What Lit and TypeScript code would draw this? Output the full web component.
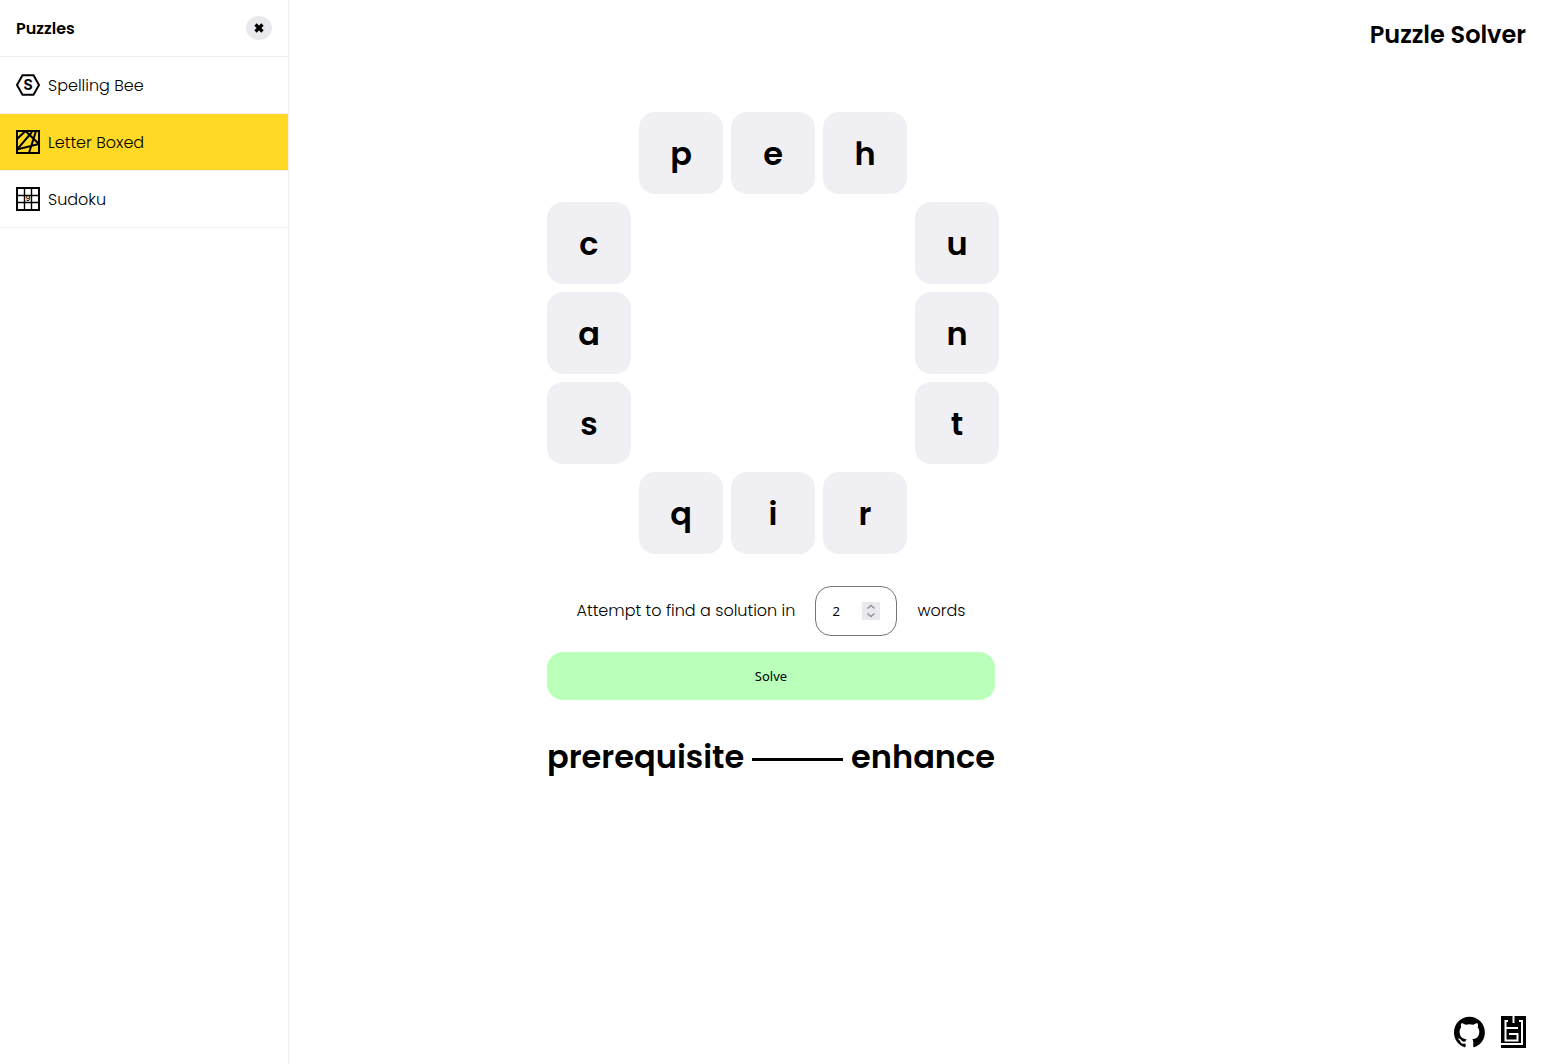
import { LitElement, html, css, svg } from "lit";
import { customElement, state } from "lit/decorators.js";

const beeIcon = svg`<svg class="icon" viewBox="0 0 24 24" aria-hidden="true">
  <path d="M6.500 2.200h11L23 12l-5.500 9.800h-11L1 12z" fill="none" stroke="#000" stroke-width="2"/>
  <text x="12" y="17" class="bee-letter">S</text>
</svg>`;

const boxedIcon = svg`<svg class="icon" viewBox="0 0 24 24" aria-hidden="true">
  <rect x="1" y="1" width="22" height="22" fill="none" stroke="#000" stroke-width="2"/>
  <path d="M1 9 9.500 1 23 14 1 19.500 16 2M20 1l-7 22" fill="none" stroke="#000" stroke-width="2"/>
</svg>`;

const sudokuIcon = svg`<svg class="icon" viewBox="0 0 24 24" aria-hidden="true">
  <rect x="1" y="1" width="22" height="22" fill="none" stroke="#000" stroke-width="2"/>
  <path d="M8.500 1v22M15.500 1v22M1 8.500h22M1 15.500h22" fill="none" stroke="#000" stroke-width="1.400"/>
  <text x="12" y="14" class="sudoku-digit">9</text>
</svg>`;

const puzzles = [
  { name: "Spelling Bee", icon: beeIcon },
  { name: "Letter Boxed", icon: boxedIcon },
  { name: "Sudoku", icon: sudokuIcon },
];

const sides = { top: "peh", left: "cas", right: "unt", bottom: "qir" };

@customElement("app-root")
export class AppRoot extends LitElement {
  static styles = css`
    :host {
      display: block;
      font-family: Poppins, Inter, sans-serif;
      font-size: 16px;
      font-weight: 300;
      line-height: 25px;
      color: #000;
      background: #fff;
    }
    * { box-sizing: border-box; }
    button, input { font-family: "Noto Sans", sans-serif; font-size: 13px; color: #000; }
    button { border: 0; padding: 0; cursor: pointer; }
    .page {
      display: grid;
      grid-template-columns: 289px minmax(452px, 1fr) 289px;
      min-height: 100vh;
    }
    .sidebar { border-right: 1px solid #f0eff4; }
    .sidebar-head, .puzzle {
      display: flex;
      align-items: center;
      height: 57px;
      padding: 0 16px;
      border-bottom: 1px solid #f0eff4;
    }
    .sidebar-head { justify-content: space-between; }
    .sidebar-title { margin: 0; font-size: 16px; font-weight: 600; }
    .close {
      width: 26px;
      height: 24px;
      border-radius: 50%;
      background: #e9e9ed;
      display: grid;
      place-items: center;
    }
    .close-icon { width: 10px; height: 10px; }
    .puzzles { list-style: none; margin: 0; padding: 0; }
    .puzzle { gap: 8px; color: inherit; text-decoration: none; }
    .puzzle.active { background: #ffd923; }
    .icon { width: 24px; height: 24px; flex: none; }
    .bee-letter { font: 700 14px Inter, sans-serif; text-anchor: middle; }
    .sudoku-digit { font: 600 7px Inter, sans-serif; text-anchor: middle; }
    .main { display: flex; justify-content: center; padding: 112px 0 32px; }
    .content { width: 448px; }
    .board {
      display: grid;
      grid-template-columns: repeat(5, 84px);
      grid-auto-rows: 82px;
      gap: 8px;
    }
    .tile {
      display: grid;
      place-items: center;
      padding-top: 2px;
      border-radius: 16px;
      background: #f0eff4;
      font-size: 32px;
      font-weight: 600;
      line-height: 48px;
    }
    .top-1 { grid-area: 1 / 2; }
    .top-2 { grid-area: 1 / 3; }
    .top-3 { grid-area: 1 / 4; }
    .left-1 { grid-area: 2 / 1; }
    .left-2 { grid-area: 3 / 1; }
    .left-3 { grid-area: 4 / 1; }
    .right-1 { grid-area: 2 / 5; }
    .right-2 { grid-area: 3 / 5; }
    .right-3 { grid-area: 4 / 5; }
    .bottom-1 { grid-area: 5 / 2; }
    .bottom-2 { grid-area: 5 / 3; }
    .bottom-3 { grid-area: 5 / 4; }
    .attempt {
      display: flex;
      align-items: center;
      justify-content: center;
      gap: 20px;
      margin: 32px 0 16px;
      line-height: 24px;
    }
    .number {
      display: flex;
      align-items: center;
      justify-content: space-between;
      width: 82px;
      height: 50px;
      padding: 0 16px;
      border: 1px solid #767676;
      border-radius: 16px;
    }
    .number-input {
      width: 24px;
      padding: 0;
      border: 0;
      outline: 0;
      background: none;
      appearance: textfield;
    }
    .number-input::-webkit-inner-spin-button { appearance: none; margin: 0; }
    .stepper { display: grid; width: 18px; background: #e9e9ed; }
    .step { display: grid; place-items: center; height: 9px; background: none; }
    .step-icon { width: 10px; height: 9px; }
    .solve {
      display: block;
      width: 100%;
      height: 48px;
      border-radius: 16px;
      background: #baffba;
    }
    .solution {
      display: flex;
      align-items: center;
      gap: 8px;
      margin-top: 32px;
      font-size: 32px;
      font-weight: 600;
      line-height: 50px;
    }
    .link { flex: 1; height: 3px; margin-top: 4px; background: #000; }
    .side {
      display: flex;
      flex-direction: column;
      justify-content: space-between;
      align-items: flex-end;
      padding: 16px;
    }
    .title { margin: 0; font-size: 24px; font-weight: 600; line-height: 38px; }
    .social { display: flex; gap: 16px; }
    .social-link { display: block; height: 32px; }
    .github { width: 31px; height: 32px; }
    .author { width: 25px; height: 32px; }
  `;

  @state() private words = 2;

  private step(by: number) {
    this.words = Math.max(1, this.words + by);
  }

  private tiles() {
    return Object.entries(sides).flatMap(([side, letters]) =>
      [...letters].map((l, i) => html`<div class="tile ${side}-${i + 1}">${l}</div>`)
    );
  }

  render() {
    return html`
      <div class="page">
        <aside class="sidebar">
          <div class="sidebar-head">
            <h2 class="sidebar-title">Puzzles</h2>
            <button class="close" aria-label="Close">
              <svg class="close-icon" viewBox="0 0 10 10"><path d="M1.500 1.500l7 7M8.500 1.500l-7 7" stroke="#000" stroke-width="3.200"/></svg>
            </button>
          </div>
          <ul class="puzzles">
            ${puzzles.map((p, i) => html`
              <li><a class="puzzle ${i === 1 ? "active" : ""}" href="#">${p.icon}<span>${p.name}</span></a></li>
            `)}
          </ul>
        </aside>
        <main class="main">
          <div class="content">
            <div class="board">${this.tiles()}</div>
            <div class="attempt">
              <label for="words">Attempt to find a solution in</label>
              <div class="number">
                <input class="number-input" id="words" type="number" min="1" .value=${String(this.words)} />
                <div class="stepper">
                  <button class="step" aria-label="More words" @click=${() => this.step(1)}>
                    <svg class="step-icon" viewBox="0 0 10 9"><path d="M1.500 6.500 5 3.500l3.500 3" fill="none" stroke="#8f8f9d" stroke-width="1.500"/></svg>
                  </button>
                  <button class="step" aria-label="Fewer words" @click=${() => this.step(-1)}>
                    <svg class="step-icon" viewBox="0 0 10 9"><path d="M1.500 2.500 5 5.500l3.500-3" fill="none" stroke="#8f8f9d" stroke-width="1.500"/></svg>
                  </button>
                </div>
              </div>
              <span>words</span>
            </div>
            <button class="solve">Solve</button>
            <div class="solution">
              <span>prerequisite</span><span class="link"></span><span>enhance</span>
            </div>
          </div>
        </main>
        <div class="side">
          <h1 class="title">Puzzle Solver</h1>
          <div class="social">
            <a class="social-link" href="#" aria-label="GitHub">
              <svg class="github" viewBox="0 0 98 96"><path fill-rule="evenodd" clip-rule="evenodd" d="M48.854 0C21.839 0 0 22 0 49.217c0 21.756 13.993 40.172 33.405 46.690 2.427.490 3.316-1.059 3.316-2.362 0-1.141-.080-5.052-.080-9.127-13.590 2.934-16.420-5.867-16.420-5.867-2.184-5.704-5.420-7.170-5.420-7.170-4.448-3.015.324-3.015.324-3.015 4.934.326 7.523 5.052 7.523 5.052 4.367 7.496 11.404 5.378 14.235 4.074.404-3.178 1.699-5.378 3.074-6.600-10.839-1.141-22.243-5.378-22.243-24.283 0-5.378 1.940-9.778 5.014-13.200-.485-1.222-2.184-6.275.486-13.038 0 0 4.125-1.304 13.426 5.052a46.970 46.970 0 0 1 12.214-1.630c4.125 0 8.330.571 12.213 1.630 9.302-6.356 13.427-5.052 13.427-5.052 2.670 6.763.970 11.816.485 13.038 3.155 3.422 5.015 7.822 5.015 13.200 0 18.905-11.404 23.060-22.324 24.283 1.780 1.548 3.316 4.481 3.316 9.126 0 6.600-.080 11.897-.080 13.526 0 1.304.890 2.853 3.316 2.364 19.412-6.520 33.405-24.935 33.405-46.691C97.707 22 75.788 0 48.854 0z"/></svg>
            </a>
            <a class="social-link" href="#" aria-label="Author">
              <svg class="author" viewBox="0 0 25 32">
                <path d="M0 0h25v32H0z"/>
                <path d="M12.500 0v7M7 5H4.500v19.500h12V18H8M4 12h13M18 5h3v23H0" fill="none" stroke="#fff" stroke-width="2"/>
              </svg>
            </a>
          </div>
        </div>
      </div>
    `;
  }
}
